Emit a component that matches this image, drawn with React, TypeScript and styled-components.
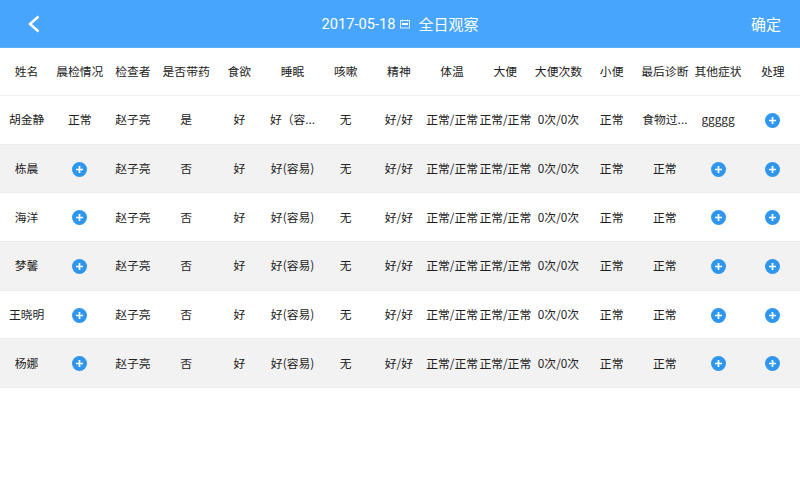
import React from "react";
import styled, { createGlobalStyle } from "styled-components";

const GlobalStyle = createGlobalStyle`
  html, body {
    margin: 0;
    padding: 0;
    background: #fff;
    font-family: "Noto Sans CJK SC", "Noto Sans", sans-serif;
  }
`;

const Page = styled.div`
  width: 800px;
  height: 480px;
  overflow: hidden;
  background: #fff;
`;

const TopBar = styled.header`
  box-sizing: border-box;
  height: 48px;
  background: #47a5fd;
  border-bottom: 1px solid #5fb1fd;
  display: grid;
  grid-template-columns: 100px 1fr 100px;
  align-items: center;
  color: #fff;
`;

const BackButton = styled.div`
  padding-left: 27px;
  display: flex;
  align-items: center;
`;

const Title = styled.div`
  display: flex;
  align-items: center;
  justify-content: center;
  font-size: 15px;
`;

const DateText = styled.span`
  font-family: Roboto, "Liberation Sans", sans-serif;
  font-size: 14.7px;
  padding-top: 1px;
`;

const CalendarIcon = styled.svg`
  margin: 0 9px 0 4px;
`;

const Confirm = styled.div`
  text-align: right;
  padding-right: 19px;
  font-size: 15px;
`;

const Row = styled.div<{ $shaded?: boolean; $header?: boolean }>`
  box-sizing: border-box;
  display: grid;
  grid-template-columns: repeat(14, 53.2px) 1fr;
  height: ${(p) => (p.$header ? "48px" : "48.7px")};
  align-items: center;
  background: ${(p) => (p.$shaded ? "#f3f2f3" : "#fff")};
  border-bottom: 1px solid ${(p) => (p.$header ? "#f0f0f0" : "#ececec")};
`;

const Cell = styled.div`
  font-size: 11.8px;
  color: #222;
  text-align: center;
  white-space: nowrap;
  display: flex;
  justify-content: center;
  align-items: center;
  padding-bottom: 2px;

  &:last-child {
    padding-left: 1px;
  }
`;

const PlusSvg = styled.svg`
  margin: 2px 0 -1px;
`;

const PlusIcon = () => (
  <PlusSvg width="15" height="15" viewBox="0 0 15 15">
    <circle cx="7.5" cy="7.5" r="7.5" fill="#2f96ee" />
    <path d="M4 7.5h7M7.5 4v7" stroke="#fff" strokeWidth="1.7" />
  </PlusSvg>
);

const headers = [
  "姓名", "晨检情况", "检查者", "是否带药", "食欲", "睡眠", "咳嗽", "精神",
  "体温", "大便", "大便次数", "小便", "最后诊断", "其他症状", "处理",
];

const plus = "+";
const firstRow = [
  "胡金静", "正常", "赵子亮", "是", "好", "好（容...", "无", "好/好",
  "正常/正常", "正常/正常", "0次/0次", "正常", "食物过...", "ggggg", plus,
];

const names = ["栋晨", "海洋", "梦馨", "王晓明", "杨娜"];

const rowFor = (name: string) => [
  name, plus, "赵子亮", "否", "好", "好(容易)", "无", "好/好",
  "正常/正常", "正常/正常", "0次/0次", "正常", "正常", plus, plus,
];

const rows = [firstRow, ...names.map(rowFor)];

export default function App() {
  return (
    <Page>
      <GlobalStyle />
      <TopBar>
        <BackButton>
          <svg width="14" height="18" viewBox="0 0 14 18">
            <path d="M11.5 1.5L3 9l8.5 7.5" fill="none" stroke="#fff" strokeWidth="2.4" />
          </svg>
        </BackButton>
        <Title>
          <DateText>2017-05-18</DateText>
          <CalendarIcon width="10" height="10" viewBox="0 0 10 10">
            <path d="M2.5 0.5v2M7.5 0.5v2" stroke="#dcedff" />
            <rect x="0.5" y="1.5" width="9" height="7.5" fill="none" stroke="#dcedff" />
            <path d="M2 5h6" stroke="#fff" strokeWidth="2" />
          </CalendarIcon>
          全日观察
        </Title>
        <Confirm>确定</Confirm>
      </TopBar>
      <Row $header>
        {headers.map((h) => (
          <Cell key={h}>{h}</Cell>
        ))}
      </Row>
      {rows.map((row, i) => (
        <Row key={row[0]} $shaded={i % 2 === 1}>
          {row.map((v, j) => (
            <Cell key={j}>{v === plus ? <PlusIcon /> : v}</Cell>
          ))}
        </Row>
      ))}
    </Page>
  );
}
